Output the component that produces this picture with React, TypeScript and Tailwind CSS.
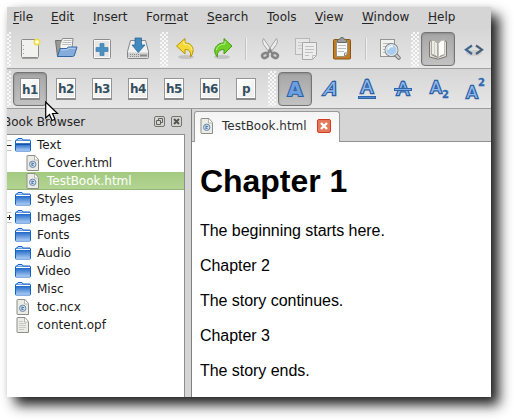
import React from "react";

const Cell = ({ children }: { children?: React.ReactNode }) => (
  <div className="flex w-9 shrink-0 items-center justify-center">{children}</div>
);

const Pressed = ({ children }: { children: React.ReactNode }) => (
  <div className="flex h-[34px] w-[34px] items-center justify-center rounded-[4px] border border-[#747474] bg-gradient-to-b from-[#a6a6a6] to-[#c2c2c2] shadow-[inset_0_1px_2px_#8c8c8c]">
    {children}
  </div>
);

const Grip = ({ className }: { className: string }) => (
  <div
    className={`h-[35px] shrink-0 bg-[conic-gradient(#fff_25%,transparent_0_50%,#fff_0_75%,transparent_0)] bg-[length:4px_4px] opacity-80 ${className}`}
  />
);

const Separator = () => (
  <div className="flex w-3 shrink-0 items-center justify-center">
    <div className="h-[22px] w-[2px] border-l border-[#c4c4c4] bg-[#efefef]" />
  </div>
);

const Svg = ({ children, w = 24, h = 24 }: { children: React.ReactNode; w?: number; h?: number }) => (
  <svg width={w} height={h} viewBox={`0 0 ${w} ${h}`} className="shrink-0 overflow-visible">
    {children}
  </svg>
);

const NewIcon = () => (
  <Svg>
    <rect x="3.5" y="2.500" width="17" height="18" rx="1" fill="#f1f1f0" stroke="#8a8a86" />
    <path d="M4 21.5h16" stroke="#777" strokeWidth="1" opacity=".6" />
    <path d="M5.5 8v1M5.5 12v1M5.5 16v1" stroke="#999" />
    <circle cx="19" cy="5" r="2.8" fill="#fff7a0" stroke="#eedb50" strokeWidth="1.4" />
    <circle cx="19" cy="5" r="1.3" fill="#fff" />
  </Svg>
);

const OpenIcon = () => (
  <Svg>
    <g transform="translate(0 -1)">
      <path d="M1.500 4.500h6l1 2h9v14H3.500z" fill="#9a9a98" stroke="#6f6f6d" />
      <path d="M6 8l2.500-5.500h10.500l-1 10H6z" fill="#f4f4f2" stroke="#8c8c8a" />
      <path d="M9.500 4.500h8M8.500 6.500h9M8 8.500h9" stroke="#bdbdbd" />
      <path d="M6 12.500h6.500l2-1.500h8.500l-2.500 8q-.4 1.500-2 1.500H3.500z" fill="#86acdc" stroke="#3465a4" />
      <path d="M7 13.800h6l2-1.500h6.500" stroke="#b7d1ef" fill="none" />
    </g>
  </Svg>
);

const PlusIcon = () => (
  <Svg>
    <rect x="3.500" y="2.500" width="17" height="19" rx="1" fill="#e6e6e5" stroke="#8d8d8b" />
    <rect x="4.500" y="3.500" width="15" height="17" fill="none" stroke="#fafafa" />
    <path d="M10 6.500h4v4h4v4h-4v4h-4v-4H6v-4h4z" fill="#4a90c2" stroke="#3c7dad" strokeWidth=".7" />
  </Svg>
);

const DownloadIcon = () => (
  <Svg>
    <path d="M4.500 3.500h15l3 11v6q0 1-1 1h-19q-1 0-1-1v-6z" fill="#f1f1f1" stroke="#858585" />
    <path d="M2 15.500h20v5H2z" fill="#cfcfcf" />
    <path d="M4 17.500h9M4 19.500h9" stroke="#8d8d8d" strokeDasharray="1 1" />
    <path d="M14 18.500h7" stroke="#888" strokeWidth="2" />
    <path d="M9 1h6.500v7H19l-6.700 7.500L6 8h3z" fill="#4389bd" stroke="#276a9d" strokeWidth=".8" />
  </Svg>
);

const UndoIcon = () => (
  <Svg w={20} h={24}>
    <ellipse cx="10" cy="20" rx="8" ry="2" fill="#8a8a8a" opacity=".35" />
    <path d="M9 1.500v4.500c8-.3 10.500 8 5.500 14 .500-5.500-1-7.500-5.500-7.500v4.500L.5 9z" fill="#f5d938" stroke="#b89700" strokeLinejoin="round" />
    <path d="M8 4v3q7 .3 8.200 6" fill="none" stroke="#fff3a0" />
  </Svg>
);

const RedoIcon = () => (
  <Svg w={20} h={24}>
    <ellipse cx="10" cy="20" rx="8" ry="2" fill="#8a8a8a" opacity=".35" />
    <path d="M12 1.500v4.500c-8-.3-12.500 8-6.500 14-.500-5.500 2-7.500 6.500-7.500v4.500l8-8z" fill="#6fd028" stroke="#479c12" strokeLinejoin="round" />
    <path d="M13 4v3q-7 .3-8.700 6" fill="none" stroke="#b7f188" />
  </Svg>
);

const CutIcon = () => (
  <Svg>
    <g transform="translate(0 -1)">
      <path d="M5.500 2.500q-2 2.500 0 6l6 8 2-2.500zM18.500 2.500q2 2.500 0 6l-6 8-2-2.500z" fill="#ededed" stroke="#a3a3a3" />
      <g fill="#d4d4d4" stroke="#858585" strokeWidth="2.500">
        <ellipse cx="7" cy="19.500" rx="3" ry="2.400" transform="rotate(-25 7 19.500)" />
        <ellipse cx="17" cy="19.500" rx="3" ry="2.400" transform="rotate(25 17 19.500)" />
      </g>
      <path d="M9.500 17.500l2.500-3 2.500 3" stroke="#858585" strokeWidth="2.500" fill="none" />
    </g>
  </Svg>
);

const CopyIcon = () => (
  <Svg>
    <g transform="translate(0 -1)">
      <rect x="1.500" y="2.500" width="14" height="16" fill="#e6e6e6" stroke="#b8b8b8" />
      <path d="M4 6.500h9M4 9.500h4M4 12.500h4" stroke="#cbcbcb" />
      <path d="M8.500 6.500h14v13l-4 4h-10z" fill="#ededed" stroke="#a8a8a8" />
      <path d="M11 10.500h9M11 13.500h9M11 16.500h8M11 19.500h4M18.500 23v-3.500h4" stroke="#c0c0c0" fill="none" />
    </g>
  </Svg>
);

const PasteIcon = () => (
  <Svg>
    <g transform="translate(0 -1)">
      <rect x="3.500" y="3.500" width="17" height="19.500" rx="1" fill="#c07d24" stroke="#8c5310" />
      <path d="M6.500 5.500h11v12l-3 3h-8z" fill="#f7f7f6" stroke="#9a8f80" />
      <path d="M8 9.500h8M8 12.500h8M8 15.500h6" stroke="#bdbdbd" />
      <path d="M14.500 20v-3h3" stroke="#888" fill="none" />
      <path d="M7.500 6.500v-2q0-1 1-1h1q.5-2 2.500-2t2.500 2h1q1 0 1 1v2z" fill="#9a9c97" stroke="#666864" />
    </g>
  </Svg>
);

const FindIcon = () => (
  <Svg>
    <g transform="translate(0 -1)">
      <rect x="2.500" y="3.500" width="14" height="17" fill="#f1f1f0" stroke="#949494" />
      <path d="M5 7.500h9M5 10.500h4M5 13.500h3M5 16.500h3" stroke="#bcbcbc" />
      <path d="M17.500 18.500l3.300 3.300" stroke="#777" strokeWidth="4" strokeLinecap="round" />
      <path d="M17.500 18.500l3.300 3.300" stroke="#ccc" strokeWidth="2" strokeLinecap="round" />
      <circle cx="13.500" cy="14" r="5.500" fill="#a9cbed" stroke="#828782" strokeWidth="3" />
      <circle cx="13.500" cy="14" r="5.500" fill="#a9cbed" stroke="#e5eaf0" strokeWidth="1.200" />
      <path d="M10 13.500q1-4 5-3" stroke="#eff7ff" strokeWidth="2" fill="none" />
    </g>
  </Svg>
);

const BookIcon = () => (
  <Svg>
    <path d="M3.500 4.500l2-1v14l6 3 7-3v-14l2 1v15l-8 2.500h-1l-8-2z" fill="#deded6" stroke="#77776f" />
    <path d="M5.500 3q4 0 6 3.500v14q-2-3-6-3z" fill="#ecece4" stroke="#a9a9a0" />
    <path d="M18.500 3q-4 0-6 3.500v14q2-3 6-3z" fill="#fdfdfa" stroke="#c2c2b9" />
    <path d="M8.500 5v12.500" stroke="#cfcfc6" />
    <path d="M15.500 4.500v13" stroke="#fff" strokeWidth="2" />
  </Svg>
);

const CodeIcon = () => (
  <Svg w={20} h={20}>
    <ellipse cx="10" cy="14" rx="8" ry="3" fill="#999" opacity=".25" />
    <path d="M8 6.500L2 10.700 8 15" stroke="#3f668f" strokeWidth="2.200" fill="none" />
    <path d="M12 6.500l6 4.200L12 15" stroke="#4a5f78" strokeWidth="2.200" fill="none" />
  </Svg>
);

const Heading = ({ label }: { label: string }) => (
  <div className="flex h-[22px] w-5 items-center justify-center border border-[#959595] border-b-2 border-b-[#8a8a8a] bg-gradient-to-br from-white to-[#ebebea] pt-[2px] font-['DejaVu_Sans',sans-serif] text-[12px] leading-none font-bold tracking-[-0.4px] text-[#34505f] shadow-[inset_0_0_0_1px_#fff]">
    {label}
  </div>
);

type LetterKind = "bold" | "italic" | "underline" | "strike" | "sub" | "sup";

const letterPlace: Record<LetterKind, { x: number; y: number; size: number }> = {
  bold: { x: 12, y: 18.5, size: 19 },
  italic: { x: 12, y: 18, size: 18 },
  underline: { x: 12, y: 16, size: 18 },
  strike: { x: 12, y: 18, size: 18 },
  sub: { x: 9, y: 15.5, size: 16 },
  sup: { x: 9, y: 20.5, size: 16 },
};

const Letter = ({ kind }: { kind: LetterKind }) => {
  const p = letterPlace[kind];
  return (
    <Svg>
      <text
        x={p.x}
        y={p.y}
        textAnchor="middle"
        fontFamily="DejaVu Sans, sans-serif"
        fontSize={p.size}
        fontWeight={kind === "bold" ? 700 : 400}
        fill={kind === "bold" ? "#6d9fdc" : "#8fb7e8"}
        stroke="#2c5fa5"
        strokeWidth={kind === "bold" ? 2.2 : 2.5}
        paintOrder="stroke"
        transform={kind === "italic" ? "translate(4.5 0) skewX(-20)" : undefined}
      >
        A
      </text>
      {kind === "underline" && <rect x="3.500" y="19.500" width="17" height="2" fill="#4f88cf" stroke="#2f64ab" />}
      {kind === "strike" && <rect x="3.500" y="11.500" width="17" height="2" fill="#7eabe2" stroke="#2f64ab" />}
      {(kind === "sub" || kind === "sup") && (
        <text
          x="18.500"
          y={kind === "sub" ? 21 : 9}
          textAnchor="middle"
          fontFamily="DejaVu Sans, sans-serif"
          fontSize="10"
          fontWeight="700"
          fill="#2e68b2"
          stroke="#2e68b2"
          strokeWidth=".3"
        >
          2
        </text>
      )}
    </Svg>
  );
};

const Folder = ({ open = false }: { open?: boolean }) => (
  <Svg w={16} h={14}>
    <defs>
      <linearGradient id="folderFill" x1="0" y1="0" x2="0" y2="1">
        <stop offset="0" stopColor="#1d68c8" />
        <stop offset="1" stopColor="#a9caf2" />
      </linearGradient>
    </defs>
    <path d="M.5 12.500v-9.500q0-1 1-1h.500l1-1.500h4l1 1.500h6.500q1 0 1 1v9.500q0 .5-.5 .5H1q-.5 0-.5-.5z" fill="#fff" stroke="#0f62cb" />
    <path d="M3 1.500h4" stroke="#b9d6f5" />
    <path d="M1 2.500h14" stroke="#0f62cb" opacity=".6" />
    <rect x="1" y={open ? 6 : 4} width="14" height={open ? 6.5 : 8.5} fill="url(#folderFill)" />
    {open && <path d="M1 6h14" stroke="#0d4fa6" strokeWidth="1.600" />}
  </Svg>
);

const FileIcon = ({ plain = false }: { plain?: boolean }) => (
  <Svg w={14} h={16}>
    <path d="M1.500.5H9l3.500 4v11h-11q-.5 0-.5-.5V1q0-.5.5-.5z" fill="#ecece7" stroke="#8d8e88" />
    <path d="M8.500 1v4h4" fill="#fff" stroke="#b4b5af" />
    {plain ? (
      <path d="M3 4.500h4M3 6.500h7M3 8.500h7M3 10.500h7M3 12.500h5" stroke="#c8c8c4" />
    ) : (
      <>
        <circle cx="6.700" cy="9.300" r="3.200" fill="#cbdcea" stroke="#7089a8" />
        <path d="M6 7.500v3.500M6 8.500h2M6 10.500h1.500" stroke="#557da9" strokeWidth="1.100" fill="none" />
      </>
    )}
  </Svg>
);

const menu = [
  { pre: "", key: "F", post: "ile", width: "w-[38px]" },
  { pre: "", key: "E", post: "dit", width: "w-[42px]" },
  { pre: "", key: "I", post: "nsert", width: "w-[53px]" },
  { pre: "For", key: "m", post: "at", width: "w-[61px]" },
  { pre: "", key: "S", post: "earch", width: "w-[60px]" },
  { pre: "", key: "T", post: "ools", width: "w-[48px]" },
  { pre: "", key: "V", post: "iew", width: "w-[47px]" },
  { pre: "", key: "W", post: "indow", width: "w-[66px]" },
  { pre: "", key: "H", post: "elp", width: "w-[50px]" },
];

type Row = { name: string; kind: "folder" | "open" | "html" | "plain"; mark?: "minus" | "plus"; child?: boolean; selected?: boolean };

const rows: Row[] = [
  { name: "Text", kind: "open", mark: "minus" },
  { name: "Cover.html", kind: "html", child: true },
  { name: "TestBook.html", kind: "html", child: true, selected: true },
  { name: "Styles", kind: "folder" },
  { name: "Images", kind: "folder", mark: "plus" },
  { name: "Fonts", kind: "folder" },
  { name: "Audio", kind: "folder" },
  { name: "Video", kind: "folder" },
  { name: "Misc", kind: "folder" },
  { name: "toc.ncx", kind: "html" },
  { name: "content.opf", kind: "plain" },
];

const TreeRow = ({ row }: { row: Row }) => (
  <div
    className={`flex h-[18px] items-center ${
      row.selected ? "bg-gradient-to-b from-[#a3ca80] to-[#b3d594] text-white shadow-[inset_0_-1px_0_#94b779]" : "text-[#1c1c1c]"
    } ${row.child ? "pl-[18px]" : ""}`}
  >
    {!row.child && (
      <div className="flex w-2 shrink-0">
        {row.mark && (
          <Svg w={5} h={11}>
            <path d="M0 .5h4.500M0 10.500h4.500" fill="none" stroke="#c4c4c4" />
            <path d="M0 5.500h4.500" stroke="#222" />
            {row.mark === "plus" && <path d="M2.500 3v5" stroke="#222" />}
          </Svg>
        )}
      </div>
    )}
    <div className="mr-[6px] flex w-4 shrink-0 justify-center">
      {row.kind === "folder" || row.kind === "open" ? <Folder open={row.kind === "open"} /> : <FileIcon plain={row.kind === "plain"} />}
    </div>
    <span>{row.name}</span>
  </div>
);

export default function App() {
  return (
    <div className="h-[420px] w-[514px] overflow-hidden bg-white p-[7px] font-['DejaVu_Sans',sans-serif] text-[12px] leading-[18px]">
      <div className="relative h-[390px] w-[484px] shadow-[8px_8px_12px_rgba(0,0,0,0.88),0_0_6px_rgba(0,0,0,0.08)]">
        <div className="flex h-full w-full flex-col overflow-hidden bg-[#d5d5d5]">
          <div className="flex h-5 shrink-0 items-center pl-[6px] text-[#252525]">
            {menu.map((m) => (
              <div key={m.key} className={`shrink-0 whitespace-nowrap ${m.width}`}>
                {m.pre}
                <span className="underline decoration-1 underline-offset-[2px]">{m.key}</span>
                {m.post}
              </div>
            ))}
          </div>

          <div className="flex h-[42px] shrink-0 items-center border-b border-[#a3a3a3] bg-gradient-to-b from-[#d5d5d5] to-[#e6e6e6] pt-[3px]">
            <Grip className="w-1" />
            <div className="w-px shrink-0" />
            <Cell><NewIcon /></Cell>
            <Cell><OpenIcon /></Cell>
            <Cell><PlusIcon /></Cell>
            <Cell><DownloadIcon /></Cell>
            <Grip className="ml-1 w-2" />
            <Cell><UndoIcon /></Cell>
            <Cell><RedoIcon /></Cell>
            <Separator />
            <Cell><CutIcon /></Cell>
            <Cell><CopyIcon /></Cell>
            <Cell><PasteIcon /></Cell>
            <Separator />
            <Cell><FindIcon /></Cell>
            <Grip className="mr-px ml-[3px] w-2" />
            <Cell><Pressed><BookIcon /></Pressed></Cell>
            <Cell><CodeIcon /></Cell>
          </div>

          <div className="flex h-10 shrink-0 items-center border-b border-[#9c9c9c] bg-gradient-to-b from-[#d6d6d6] to-[#e6e6e6]">
            <Grip className="w-1" />
            <div className="w-px shrink-0" />
            <Cell><Pressed><div className="pt-px"><Heading label="h1" /></div></Pressed></Cell>
            {["h2", "h3", "h4", "h5", "h6", "p"].map((h) => (
              <Cell key={h}><Heading label={h} /></Cell>
            ))}
            <Grip className="mr-px ml-1 w-2" />
            <Cell><Pressed><Letter kind="bold" /></Pressed></Cell>
            <Cell><Letter kind="italic" /></Cell>
            <Cell><Letter kind="underline" /></Cell>
            <Cell><Letter kind="strike" /></Cell>
            <Cell><Letter kind="sub" /></Cell>
            <Cell><Letter kind="sup" /></Cell>
          </div>

          <div className="flex min-h-0 flex-1">
            <div className="flex w-[184px] shrink-0 flex-col">
              <div className="flex h-[25px] shrink-0 items-center pr-[9px]">
                <span className="-ml-[4px] flex-1 whitespace-nowrap text-[#252525]">Book Browser</span>
                <Svg w={11} h={11}>
                  <rect x=".5" y=".5" width="10" height="10" rx="1.500" fill="none" stroke="#73736f" />
                  <path d="M4.500 4V2.500h4v4H7M2.500 4.500h4v4h-4z" fill="none" stroke="#60605c" />
                </Svg>
                <div className="w-[6px]" />
                <Svg w={11} h={11}>
                  <rect x=".5" y=".5" width="10" height="10" rx="1.500" fill="none" stroke="#73736f" />
                  <path d="M3 3l5 5M8 3L3 8" stroke="#555550" strokeWidth="2" />
                </Svg>
              </div>
              <div className="mr-[6px] flex-1 border-t border-r border-[#8e8e8e] bg-white pt-px">
                {rows.map((r) => (
                  <TreeRow key={r.name} row={r} />
                ))}
              </div>
            </div>

            <div className="flex flex-1 flex-col border-l border-[#808080]">
              <div className="flex h-[33px] shrink-0 items-end">
                <div className="h-full w-[2px] border-b border-[#929292]" />
                <div className="flex h-[31px] w-[146px] shrink-0 items-center rounded-t-[3px] border-t border-r border-l border-[#999] bg-gradient-to-b from-[#f4f4f4] to-white pb-[2px] pl-[5px] text-[#303030]">
                  <FileIcon />
                  <span className="ml-2 w-[95px]">TestBook.html</span>
                  <Svg w={14} h={14}>
                    <rect x=".5" y=".5" width="13" height="13" rx="1.500" fill="#e4795d" stroke="#cf3c20" />
                    <path d="M4 4l6 6M10 4l-6 6" stroke="#fff" strokeWidth="2.400" />
                  </Svg>
                </div>
                <div className="h-full flex-1 border-b border-[#929292]" />
              </div>
              <div className="flex-1 bg-white pl-2 font-['Liberation_Sans',Arial,sans-serif] text-[16px] leading-[19px] tracking-[-0.04px] text-black">
                <h1 className="mt-[21px] mb-[21px] text-[32px] leading-[37px] font-bold tracking-[-0.05px]">Chapter 1</h1>
                <p className="mb-4">The beginning starts here.</p>
                <p className="mb-4">Chapter 2</p>
                <p className="mb-4">The story continues.</p>
                <p className="mb-4">Chapter 3</p>
                <p>The story ends.</p>
              </div>
            </div>
          </div>
        </div>
        <svg width="14" height="21" viewBox="0 0 14 21" className="absolute top-[94px] left-[38px]">
          <path d="M.7 1v16l3.800-3.500 2.500 6 3-1.300-2.500-5.700h5z" fill="#fff" stroke="#000" strokeWidth="1.200" />
        </svg>
      </div>
    </div>
  );
}
